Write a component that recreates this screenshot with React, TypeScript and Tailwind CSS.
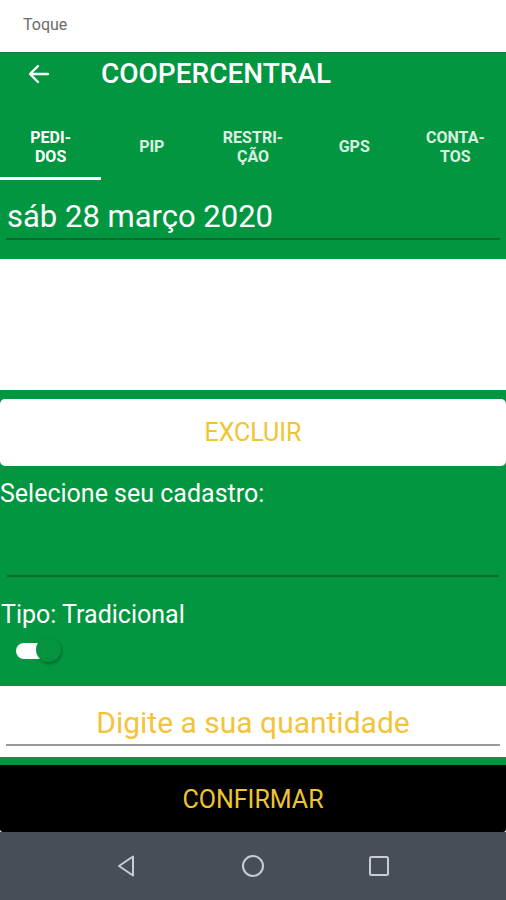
const TABS = [
  { label: ["PEDI-", "DOS"], active: true },
  { label: ["PIP"] },
  { label: ["RESTRI-", "ÇÃO"] },
  { label: ["GPS"] },
  { label: ["CONTA-", "TOS"] },
];

function Toggle() {
  return (
    <div className="relative w-[46px] h-[28px] ml-[16px]">
      <div className="absolute left-0 top-[6px] w-[36px] h-[16px] rounded-full bg-white" />
      <div className="absolute left-[20px] top-0 w-[25px] h-[25px] rounded-full bg-[#05933f] shadow-[1px_2px_3px_rgba(0,0,0,0.3)]" />
    </div>
  );
}

export default function App() {
  return (
    <div className="w-[506px] h-[900px] flex flex-col bg-white overflow-hidden" style={{ fontFamily: "Roboto, 'Noto Sans', sans-serif" }}>
      {/* status bar */}
      <div className="h-[52px] bg-white flex items-start pl-[23px] pt-[13px]">
        <span className="text-[16px] text-[#6b6b6b]">Toque</span>
      </div>

      {/* app bar + tabs */}
      <div className="bg-[#01963f] border-t border-[#0b7a37]">
        <div className="h-[62px] flex items-start pt-[5px]">
          <svg className="ml-[27px] mt-[4px]" width="24" height="24" viewBox="0 0 24 24" fill="none" stroke="white" strokeWidth="2.4" strokeLinecap="round" strokeLinejoin="round">
            <path d="M21 12H3.5M11 4l-8 8 8 8" />
          </svg>
          <h1 className="ml-[50px] text-[28px] leading-[32px] font-medium text-white">COOPERCENTRAL</h1>
        </div>
        <div className="grid grid-cols-5 h-[65px]">
          {TABS.map((t) => (
            <div key={t.label.join("")} className="relative flex flex-col items-center justify-center pb-[2px]">
              {t.label.map((l) => (
                <span key={l} className={`text-[16px] leading-[19px] font-bold ${t.active ? "text-white" : "text-white/85"}`}>{l}</span>
              ))}
              {t.active && <div className="absolute left-0 right-0 bottom-0 h-[3px] bg-white" />}
            </div>
          ))}
        </div>
      </div>

      {/* date */}
      <div className="bg-[#01963f] h-[79px] px-[6px] pt-[18px] shadow-[0_1px_1px_rgba(0,0,0,0.15)]">
        <div className="text-[31px] leading-[38px] text-white pl-[1px]">sáb 28 março 2020</div>
        <div className="mt-[2px] h-[2px] bg-[#0c6a30]" />
      </div>

      {/* empty list */}
      <div className="h-[131px] bg-white" />

      {/* excluir */}
      <div className="bg-[#01963f] pt-[9px]">
        <button className="w-full h-[67px] bg-white rounded-[5px] text-[25px] text-[#f0c531]">EXCLUIR</button>
      </div>

      {/* cadastro */}
      <div className="bg-[#01963f] h-[220px] flex flex-col">
        <div className="text-[25px] leading-[30px] text-white mt-[13px]">Selecione seu cadastro:</div>
        <div className="mx-[7px] mt-[66px] h-[2px] bg-[#0c6a30]" />
        <div className="text-[25px] leading-[30px] text-white mt-[23px] pl-[1px]">Tipo: Tradicional</div>
        <div className="mt-[7px]">
          <Toggle />
        </div>
      </div>

      {/* quantidade */}
      <div className="h-[71px] bg-white flex flex-col px-[6px]">
        <div className="text-[30px] leading-[36px] text-[#f3c43a] text-center mt-[19px]">Digite a sua quantidade</div>
        <div className="mt-[3px] h-[2px] bg-[#9a9a9a]" />
      </div>
      <div className="h-[8px] bg-[#01963f]" />

      {/* confirmar */}
      <button className="h-[67px] bg-black rounded-b-[3px] text-[25px] text-[#f0c531] w-full pt-[3px]">CONFIRMAR</button>

      {/* nav bar */}
      <div className="flex-1 bg-[#474e57] flex items-center justify-center gap-[100px] pb-[1px]">
        <svg width="26" height="26" viewBox="0 0 26 26" fill="none" stroke="#c9cdd1" strokeWidth="2" strokeLinejoin="round">
          <path d="M19 3.5v19L5 13z" />
        </svg>
        <svg width="26" height="26" viewBox="0 0 26 26" fill="none" stroke="#c9cdd1" strokeWidth="2">
          <circle cx="13" cy="13" r="10" />
        </svg>
        <svg width="26" height="26" viewBox="0 0 26 26" fill="none" stroke="#c9cdd1" strokeWidth="2">
          <rect x="4" y="4" width="18" height="18" rx="1.5" />
        </svg>
      </div>
    </div>
  );
}
